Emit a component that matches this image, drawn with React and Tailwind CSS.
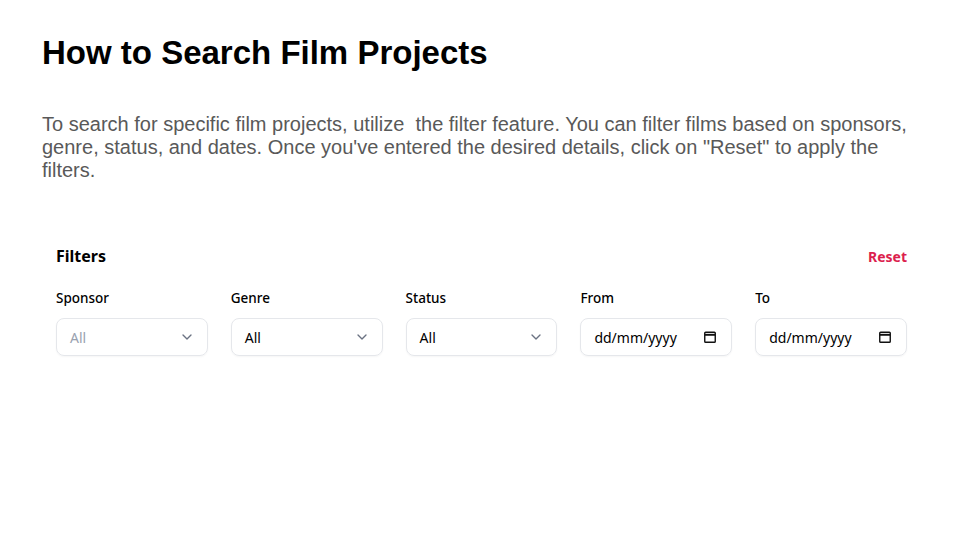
import React from 'react';

const ui = { fontFamily: '"Noto Sans", "Open Sans", sans-serif' };

function Chevron() {
    return (
        <svg className="w-4 h-4 text-gray-500" viewBox="0 0 24 24" fill="none" stroke="currentColor" strokeWidth="2" strokeLinecap="round" strokeLinejoin="round">
            <path d="M6 9l6 6 6-6" />
        </svg>
    );
}

function Calendar() {
    return (
        <svg className="w-[14px] h-[14px]" viewBox="0 0 16 16" fill="none" stroke="#111" strokeWidth="1.6">
            <rect x="2" y="2.5" width="12" height="11.5" rx="1" />
            <path d="M2 5.5h12" strokeWidth="2.2" />
        </svg>
    );
}

function SelectBox({ label, value, muted }) {
    return (
        <div className="flex flex-col gap-[10px]">
            <span className="text-[13.5px] font-medium text-black">{label}</span>
            <div className="h-[38px] rounded-lg border border-gray-200 flex items-center justify-between pl-[13px] pr-3 shadow-[0_1px_2px_rgba(0,0,0,0.04)]">
                <span className={'text-[14px] ' + (muted ? 'text-gray-400' : 'text-black')}>{value}</span>
                <Chevron />
            </div>
        </div>
    );
}

function DateBox({ label }) {
    return (
        <div className="flex flex-col gap-[10px]">
            <span className="text-[13.5px] font-medium text-black">{label}</span>
            <div className="h-[38px] rounded-lg border border-gray-200 flex items-center justify-between pl-[13px] pr-[14px] shadow-[0_1px_2px_rgba(0,0,0,0.04)]">
                <span className="text-[14px] text-black">dd/mm/yyyy</span>
                <Calendar />
            </div>
        </div>
    );
}

export default function App() {
    return (
        <div className="w-[960px] h-[540px] bg-white px-[42px] pt-[36px]">
            <h1 className="text-[33px] font-bold text-black leading-none" style={{ fontFamily: '"Liberation Sans", Arial, sans-serif' }}>
                How to Search Film Projects
            </h1>
            <p className="mt-[44px] text-[20px] leading-[23px] text-[#595959] -mr-2" style={{ fontFamily: '"Liberation Sans", Arial, sans-serif' }}>
                To search for specific film projects, utilize&nbsp; the filter feature. You can filter films based on sponsors, genre, status, and dates. Once you've entered the desired details, click on "Reset" to apply the filters.
            </p>

            <div className="mt-[62px] ml-[14px] mr-[11px]" style={ui}>
                <div className="flex items-center justify-between">
                    <h2 className="text-[16px] font-bold text-black">Filters</h2>
                    <button className="text-[14px] font-bold text-[#dc1f4e]">Reset</button>
                </div>
                <div className="mt-[20px] grid grid-cols-5 gap-[23px]">
                    <SelectBox label="Sponsor" value="All" muted />
                    <SelectBox label="Genre" value="All" />
                    <SelectBox label="Status" value="All" />
                    <DateBox label="From" />
                    <DateBox label="To" />
                </div>
            </div>
        </div>
    );
}
